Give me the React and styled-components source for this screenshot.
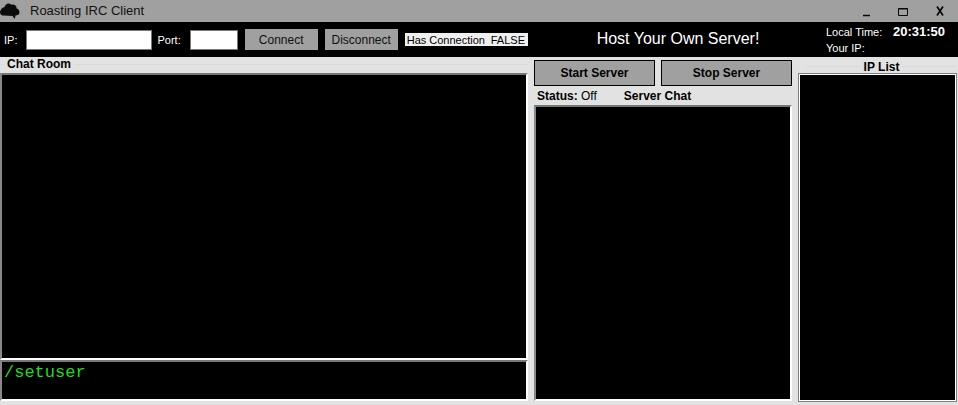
import React, { useState } from "react";
import styled, { createGlobalStyle } from "styled-components";

const GlobalStyle = createGlobalStyle`
  * { box-sizing: border-box; }
  body { margin: 0; background: #e2e2e2; }
  button, input, textarea { font: inherit; border-radius: 0; }
`;

const columns = "minmax(0, 528fr) minmax(0, 258fr) minmax(0, 159fr)";

const Window = styled.div`
  display: flex;
  flex-direction: column;
  min-height: 100vh;
  background: #e2e2e2;
  color: #000;
  font-family: "Liberation Sans", Arial, sans-serif;
  font-size: 12px;
  line-height: 16px;
`;

const TitleBar = styled.header`
  display: flex;
  align-items: center;
  height: 22px;
  padding-right: 6px;
  background: #a0a0a0;
`;

const Title = styled.h1`
  flex: 1;
  margin: 0 0 0 10px;
  font-size: 13px;
  font-weight: 400;
  color: #111;
`;

const WindowButton = styled.button`
  display: flex;
  align-items: center;
  justify-content: center;
  width: 24px;
  height: 22px;
  margin-left: 13px;
  padding: 0;
  border: 0;
  background: transparent;
`;

const Toolbar = styled.div`
  display: grid;
  grid-template-columns: ${columns};
  column-gap: 6px;
  align-items: center;
  height: 35px;
  padding-right: 1px;
  background: #000;
  color: #fff;
  font-size: 11px;
`;

const ConnectForm = styled.form`
  display: flex;
  align-items: center;
  gap: 7px;
  padding-left: 4px;
`;

const Fields = styled.div`
  display: flex;
  gap: 5px;
`;

const Field = styled.label`
  display: flex;
  align-items: center;
  gap: 9px;
`;

const FieldInput = styled.input`
  width: ${(p) => p.$width};
  height: 20px;
  padding: 0 3px;
  border: 1px solid #777;
  background: #fff;
  color: #000;
`;

const FlatButton = styled.button`
  flex: none;
  width: 73px;
  height: 21px;
  padding: 0;
  border: 0;
  background: #a0a0a0;
  color: #111;
  font-size: 12px;
`;

const ConnectionFlag = styled.output`
  display: flex;
  flex: 1;
  justify-content: space-between;
  height: 13px;
  padding: 0 3px 0 2px;
  background: #f0f0f0;
  color: #000;
  line-height: 14px;
  white-space: nowrap;
`;

const HostHeading = styled.h2`
  margin: 0;
  padding: 0 0 2px 30px;
  font-size: 16px;
  font-weight: 400;
  text-align: center;
  white-space: nowrap;
`;

const Clock = styled.dl`
  display: grid;
  grid-template-columns: 67px 1fr;
  margin: 0;
  padding-left: 28px;
  white-space: nowrap;
`;

const ClockTerm = styled.dt``;

const ClockValue = styled.dd`
  margin: 0;
  font-size: 13px;
  font-weight: 700;
`;

const Main = styled.main`
  display: grid;
  flex: 1;
  grid-template-columns: ${columns};
  column-gap: 6px;
  padding: 0 1px 4px 0;
`;

const Panel = styled.section`
  display: flex;
  flex-direction: column;
  min-width: 0;
`;

const PanelTitle = styled.h2`
  margin: 0;
  font-size: 12px;
  font-weight: 700;
`;

const GroupTitle = styled.div`
  display: flex;
  align-items: center;
  height: 16px;
  padding: ${(p) => (p.$centered ? "3px 0 0 8px" : "0 0 2px")};

  &::before, &::after {
    content: "";
    height: 1px;
    flex: 1;
    background: #d9d9d9;
  }
  &::before { flex: ${(p) => (p.$centered ? "1" : "0 0 4px")}; }
  ${PanelTitle} { padding: 0 3px; }
`;

const Screen = styled.div`
  flex: 1;
  border: 2px solid;
  border-color: #777 #fff #fff #888;
  background: #000;
  color: #23d923;
`;

const IpScreen = styled.div`
  flex: 1;
  margin-bottom: -1px;
  border: 1px solid #808084;
  background: #000;
  box-shadow: inset 0 0 0 1px #fff;
`;

const CommandBox = styled.textarea`
  display: block;
  width: 100%;
  height: 41px;
  padding: 2px;
  border: 2px solid;
  border-color: #777 #fff #fff #888;
  outline: 0;
  resize: none;
  background: #000;
  color: #23d923;
  &&& { font: 17px/18px "Liberation Mono", "Courier New", monospace; }
`;

const ServerButtons = styled.div`
  display: grid;
  grid-template-columns: 121fr 131fr;
  gap: 6px;
  padding-top: 3px;
`;

const ServerButton = styled.button`
  height: 26px;
  padding: 0;
  border: 1px solid #000;
  background: #a0a0a0;
  font-weight: 700;
`;

const StatusRow = styled.div`
  display: flex;
  align-items: center;
  gap: 27px;
  height: 19px;
  padding: 0 3px;
`;

const Status = styled.p`
  margin: 0;
`;

const Cloud = () => (
  <svg width="20" height="18" viewBox="0 0 20 18" aria-hidden="true">
    <path
      fill="#0b0b0b"
      d="M3.500 13.500 C0 14 -1 9.500 1 7.800 C1.500 6 3 5 4.500 5.200 C5.500 1.500 9 0.500 11.300 2.800 C14 1.800 16.500 3.500 16.700 6.500 C20 7.300 20.300 12 18 13 L15.500 13.600 L14.800 17 L12.500 14 Z"
    />
  </svg>
);

const Glyph = ({ children }) => (
  <svg width="12" height="12" viewBox="0 0 12 12" fill="none" stroke="#080808" aria-hidden="true">
    {children}
  </svg>
);

export default function App() {
  const [command, setCommand] = useState("/setuser");

  return (
    <Window>
      <GlobalStyle />
      <TitleBar>
        <Cloud />
        <Title>Roasting IRC Client</Title>
        <WindowButton type="button" aria-label="Minimize">
          <Glyph><path d="M3 10.500h7" strokeWidth="1.500" /></Glyph>
        </WindowButton>
        <WindowButton type="button" aria-label="Maximize">
          <Glyph><path d="M1.500 3.500h9v7h-9zM1 4h10" /></Glyph>
        </WindowButton>
        <WindowButton type="button" aria-label="Close">
          <Glyph><path d="M3 1.500l6 9M9 1.500l-6 9" strokeWidth="1.700" /></Glyph>
        </WindowButton>
      </TitleBar>

      <Toolbar>
        <ConnectForm onSubmit={(e) => e.preventDefault()}>
          <Fields>
            <Field>IP:<FieldInput $width="126px" name="ip" /></Field>
            <Field>Port:<FieldInput $width="48px" name="port" /></Field>
          </Fields>
          <FlatButton type="submit">Connect</FlatButton>
          <FlatButton type="button">Disconnect</FlatButton>
          <ConnectionFlag><span>Has Connection</span><span>FALSE</span></ConnectionFlag>
        </ConnectForm>
        <HostHeading>Host Your Own Server!</HostHeading>
        <Clock>
          <ClockTerm>Local Time:</ClockTerm>
          <ClockValue>20:31:50</ClockValue>
          <ClockTerm>Your IP:</ClockTerm>
          <ClockValue />
        </Clock>
      </Toolbar>

      <Main>
        <Panel>
          <GroupTitle><PanelTitle>Chat Room</PanelTitle></GroupTitle>
          <Screen role="log" aria-label="Chat Room" />
          <CommandBox
            aria-label="Command"
            spellCheck={false}
            value={command}
            onChange={(e) => setCommand(e.target.value)}
          />
        </Panel>
        <Panel>
          <ServerButtons>
            <ServerButton type="button">Start Server</ServerButton>
            <ServerButton type="button">Stop Server</ServerButton>
          </ServerButtons>
          <StatusRow>
            <Status><b>Status:</b> Off</Status>
            <PanelTitle>Server Chat</PanelTitle>
          </StatusRow>
          <Screen role="log" aria-label="Server Chat" />
        </Panel>
        <Panel>
          <GroupTitle $centered><PanelTitle>IP List</PanelTitle></GroupTitle>
          <IpScreen aria-label="IP List" />
        </Panel>
      </Main>
    </Window>
  );
}
